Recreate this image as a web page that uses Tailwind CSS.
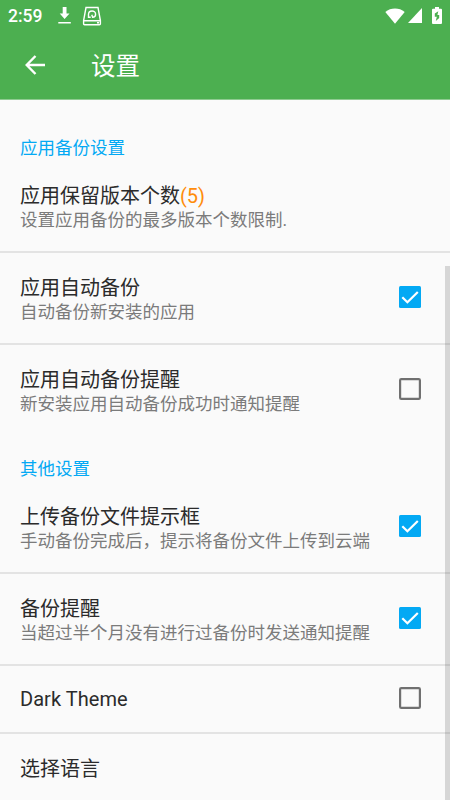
<!DOCTYPE html>
<html lang="zh-CN">
<head>
<meta charset="utf-8">
<title>设置</title>
<script src="https://cdn.jsdelivr.net/npm/@tailwindcss/browser@4"></script>
</head>
<body class="bg-[#fafafa]">
<svg class="hidden">
  <symbol id="on" viewBox="0 0 22 22"><rect width="22" height="22" rx="1.5" fill="#03a9f4"/><path d="M3.3 11.2 8.4 16.2 18.8 6" fill="none" stroke="#fff" stroke-width="2.2"/></symbol>
  <symbol id="off" viewBox="0 0 22 22"><rect x="1.1" y="1.1" width="19.8" height="19.8" rx="1.2" fill="none" stroke="#707070" stroke-width="2.2"/></symbol>
</svg>
<div class="relative w-[450px] h-[800px] overflow-hidden bg-[#fafafa] text-[#2b2b2b] font-['Roboto','Noto_Sans_CJK_SC',sans-serif] whitespace-nowrap">
  <header class="h-[100px] bg-[#4caf50] text-white border-b border-[#8fcb91]">
    <div class="h-8 pb-px flex items-center pl-2 pr-2">
      <span class="w-[50px] text-[17.5px] leading-8 font-medium">2:59</span>
      <svg class="w-[13px] h-[17px]" viewBox="0 0 13 17" fill="#fff"><path d="M4.7 0h3.8v6.500h3L6.600 12 1.700 6.500h3zM.3 15h12.500v1.600H.3z"/></svg>
      <svg class="ml-[11px] w-5 h-5" viewBox="0 0 20 20" fill="none" stroke="#fff" stroke-width="1.4"><path d="M4 1.500h12l2.400 13v3.200q0 1-1 1H2.600q-1 0-1-1v-3.200zM1.800 14.800h16.400M15 16.800h2"/><path d="M8.700 11.200H6.500V8.500C6.500 3.900 13.600 3.900 13.600 8.200c0 1.800-1.200 3.100-3 3.100L9.800 8.800" stroke-width="1.4"/></svg>
      <svg class="ml-auto w-[20px] h-[16px]" viewBox="0 0 20 16" fill="#fff"><path d="M.3 4C5.700-.6 14.300-.6 19.700 4L10 15.700z"/></svg>
      <svg class="ml-[3px] w-[14px] h-[15px]" viewBox="0 0 14 15" fill="#fff"><path d="M14 0v15H0z"/></svg>
      <svg class="ml-[10px] w-[10px] h-[17px]" viewBox="0 0 10 17"><path d="M3 0h4v1.800h2q1 0 1 1V16q0 1-1 1H1q-1 0-1-1V2.800q0-1 1-1h2z" fill="#fff"/><path d="M6.300 4.300 2.800 6.500v3.200h2L3.800 14l3.400-3V8H5.400z" fill="#4caf50"/></svg>
    </div>
    <div class="h-[67px] flex items-center pl-[25px]">
      <svg class="-mt-px w-5 h-5" viewBox="0 0 20 20" fill="none" stroke="#fff" stroke-width="2.4"><path d="M20 10H2M10.500 1 1.700 10l8.800 9"/></svg>
      <h1 class="ml-[46px] pt-[3px] text-[24.5px] leading-8">设置</h1>
    </div>
  </header>
  <main>
    <h2 class="mt-9 h-6 pl-5 text-[17.5px] leading-6 text-[#03a9f4]">应用备份设置</h2>
    <section class="h-[93px] pl-5 pt-[23px] border-b-2 border-[#e3e3e3]">
      <p class="text-[20px] leading-[26px]">应用保留版本个数<span class="text-[#ff8c0a]">(5)</span></p>
      <p class="-mt-px text-[17.5px] leading-6 text-[#7b7b7b]">设置应用备份的最多版本个数限制.</p>
    </section>
    <section class="h-[92px] pl-5 pr-[29px] flex justify-between border-b-2 border-[#e3e3e3]">
      <div class="pt-[22px]"><p class="text-[20px] leading-[26px]">应用自动备份</p><p class="-mt-px text-[17.5px] leading-6 text-[#7b7b7b]">自动备份新安装的应用</p></div>
      <svg class="mt-[33px] w-[22px] h-[22px]"><use href="#on"/></svg>
    </section>
    <section class="h-[91px] pl-5 pr-[29px] flex justify-between">
      <div class="pt-[22px]"><p class="text-[20px] leading-[26px]">应用自动备份提醒</p><p class="-mt-px text-[17.5px] leading-6 text-[#7b7b7b]">新安装应用自动备份成功时通知提醒</p></div>
      <svg class="mt-[33px] w-[22px] h-[22px]"><use href="#off"/></svg>
    </section>
    <h2 class="mt-[21px] h-6 pl-5 text-[17.5px] leading-6 text-[#03a9f4]">其他设置</h2>
    <section class="h-[93px] pl-5 pr-[29px] flex justify-between border-b-2 border-[#e3e3e3]">
      <div class="pt-[23px]"><p class="text-[20px] leading-[26px]">上传备份文件提示框</p><p class="-mt-px text-[17.5px] leading-6 text-[#7b7b7b]">手动备份完成后，提示将备份文件上传到云端</p></div>
      <svg class="mt-[34px] w-[22px] h-[22px]"><use href="#on"/></svg>
    </section>
    <section class="h-[92px] pl-5 pr-[29px] flex justify-between border-b-2 border-[#e3e3e3]">
      <div class="pt-[22px]"><p class="text-[20px] leading-[26px]">备份提醒</p><p class="-mt-px text-[17.5px] leading-6 text-[#7b7b7b]">当超过半个月没有进行过备份时发送通知提醒</p></div>
      <svg class="mt-[33px] w-[22px] h-[22px]"><use href="#on"/></svg>
    </section>
    <section class="h-[68px] pl-5 pr-[29px] flex items-center justify-between border-b-2 border-[#e3e3e3]">
      <p class="text-[20px] leading-[26px] tracking-[0.05px]">Dark Theme</p>
      <svg class="-mt-[2px] w-[22px] h-[22px]"><use href="#off"/></svg>
    </section>
    <section class="h-[68px] pt-px pl-5 flex items-center"><p class="text-[20px] leading-[26px]">选择语言</p></section>
  </main>
  <div class="absolute right-0 top-[266px] w-[5px] h-[534px] bg-black/14"></div>
</div>
</body>
</html>
